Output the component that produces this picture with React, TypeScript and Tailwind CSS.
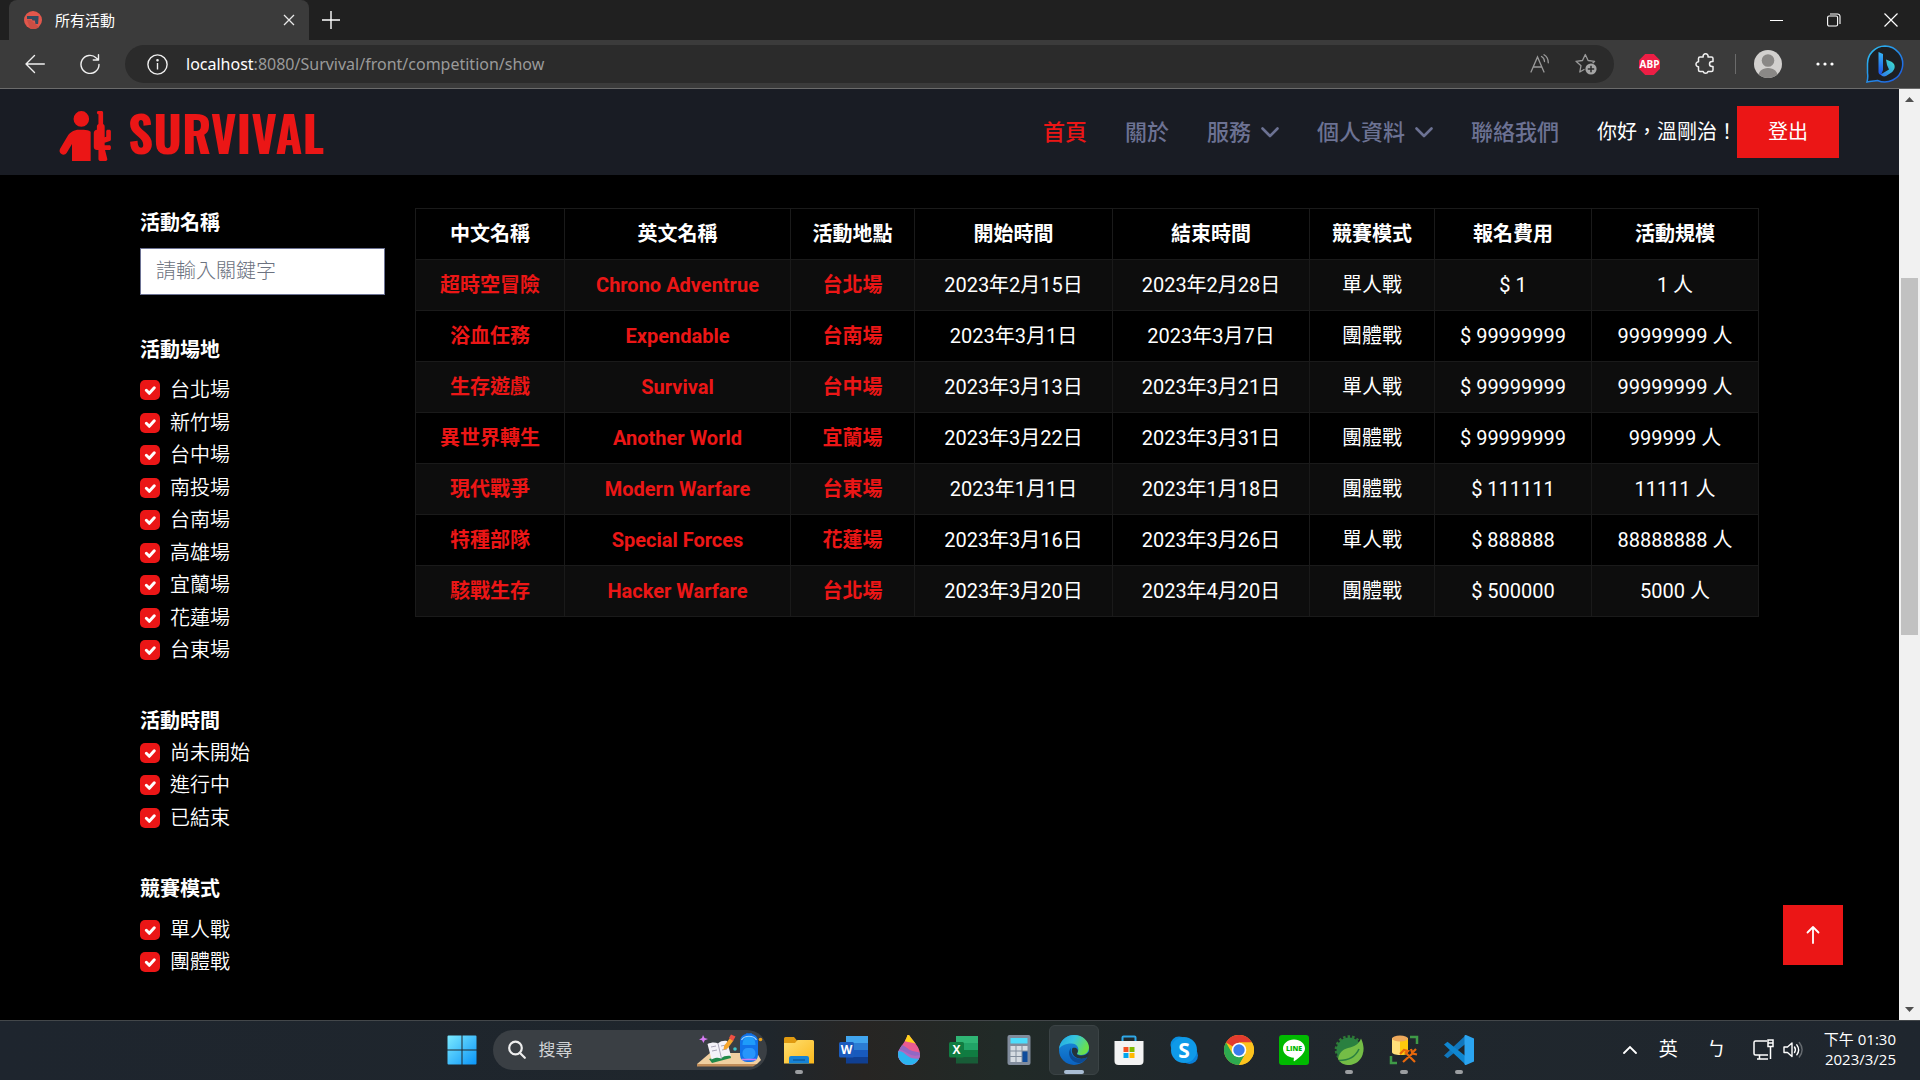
import React from "react";
import { FaPersonRifle } from "react-icons/fa6";

const cjk = "font-['Roboto','Noto_Sans_CJK_TC',sans-serif]";
const shell = "font-['Noto_Sans','Noto_Sans_CJK_TC',sans-serif]";

const venues = ["台北場", "新竹場", "台中場", "南投場", "台南場", "高雄場", "宜蘭場", "花蓮場", "台東場"];
const times = ["尚未開始", "進行中", "已結束"];
const modes = ["單人戰", "團體戰"];

const headers = ["中文名稱", "英文名稱", "活動地點", "開始時間", "結束時間", "競賽模式", "報名費用", "活動規模"];
const rows = [
  ["超時空冒險", "Chrono Adventrue", "台北場", "2023年2月15日", "2023年2月28日", "單人戰", "$ 1", "1 人"],
  ["浴血任務", "Expendable", "台南場", "2023年3月1日", "2023年3月7日", "團體戰", "$ 99999999", "99999999 人"],
  ["生存遊戲", "Survival", "台中場", "2023年3月13日", "2023年3月21日", "單人戰", "$ 99999999", "99999999 人"],
  ["異世界轉生", "Another World", "宜蘭場", "2023年3月22日", "2023年3月31日", "團體戰", "$ 99999999", "999999 人"],
  ["現代戰爭", "Modern Warfare", "台東場", "2023年1月1日", "2023年1月18日", "團體戰", "$ 111111", "11111 人"],
  ["特種部隊", "Special Forces", "花蓮場", "2023年3月16日", "2023年3月26日", "單人戰", "$ 888888", "88888888 人"],
  ["駭戰生存", "Hacker Warfare", "台北場", "2023年3月20日", "2023年4月20日", "團體戰", "$ 500000", "5000 人"],
];

function TitleBar() {
  return (
    <div className="flex h-10 items-stretch bg-[#202020] pl-[9px] pr-px text-white">
      <div className="flex w-[300px] items-center rounded-t-lg bg-[#3b3b3b] pl-[15px] pr-[10px]">
        <svg width="18" height="18" viewBox="0 0 18 18" aria-hidden="true">
          <circle cx="9" cy="9" r="9" fill="#e2574c" />
          <path d="M7 9l8 7.200a9 9 0 0 1-9 1.300L3 9z" fill="#cb4e44" />
          <path d="M3 5h11.500v2l-.4 6h-2.600l-.7-3.500H8.500L7.800 8H3z" fill="#324a5e" />
        </svg>
        <span className="ml-[13px] flex-1 text-[15px]">所有活動</span>
        <button aria-label="關閉分頁" className="grid size-5 place-items-center">
          <svg width="12" height="12" viewBox="0 0 12 12" stroke="#e8e8e8" strokeWidth="1.3"><path d="M1 1l10 10M11 1L1 11" /></svg>
        </button>
      </div>
      <button aria-label="新分頁" className="ml-3 grid w-5 place-items-center">
        <svg width="18" height="18" viewBox="0 0 18 18" stroke="#fff" strokeWidth="1.4"><path d="M9 0v18M0 9h18" /></svg>
      </button>
      <div className="ml-auto flex">
        <button aria-label="最小化" className="grid w-[57px] place-items-center">
          <svg width="14" height="14" viewBox="0 0 14 14" stroke="#fff"><path d="M0 7.500h13" /></svg>
        </button>
        <button aria-label="還原" className="grid w-[57px] place-items-center">
          <svg width="14" height="14" viewBox="0 0 14 14" fill="none" stroke="#fff" strokeWidth="1.1"><rect x=".6" y="3" width="10" height="10" rx="1.500" /><path d="M3 1h7.500a2.500 2.500 0 0 1 2.500 2.500V11" /></svg>
        </button>
        <button aria-label="關閉" className="grid w-[57px] place-items-center">
          <svg width="14" height="14" viewBox="0 0 14 14" stroke="#fff" strokeWidth="1.2"><path d="M.5.5l13 13M13.500.5l-13 13" /></svg>
        </button>
      </div>
    </div>
  );
}

function Toolbar() {
  return (
    <div className="flex h-[49px] items-center border-b border-[#6b6b6b] bg-[#3b3b3b] pl-[25px] pr-4 text-white">
      <button aria-label="上一頁">
        <svg width="20" height="20" viewBox="0 0 20 20" fill="none" stroke="#f0f0f0" strokeWidth="1.4" strokeLinecap="round" strokeLinejoin="round"><path d="M19.300 10H1M9.500 1.500L1 10l8.500 8.500" /></svg>
      </button>
      <button aria-label="重新整理" className="ml-[35px]">
        <svg width="20" height="20" viewBox="0 0 20 20" fill="none" stroke="#f0f0f0" strokeWidth="1.4" strokeLinecap="round" strokeLinejoin="round"><path d="M19 10.500A9 9 0 1 1 16.300 4l2.200 2M18.500.8V6h-5.200" /></svg>
      </button>
      <div className="ml-[25px] flex h-[38px] flex-1 items-center rounded-full bg-[#2b2b2b] pl-[22px] pr-[17px]">
        <svg width="21" height="21" viewBox="0 0 21 21" fill="none" stroke="#f0f0f0" strokeWidth="1.4"><circle cx="10.500" cy="10.500" r="9.600" /><path d="M10.500 9v6.500" /><circle cx="10.500" cy="6.200" r=".6" fill="#fff" /></svg>
        <span className="ml-[18px] flex-1 text-base text-[#9a9a9a]"><span className="text-white">localhost</span>:8080/Survival/front/competition/show</span>
        <button aria-label="朗讀">
          <svg width="21" height="20" viewBox="0 0 21 20" fill="none" stroke="#9a9a9a" strokeWidth="1.3" strokeLinecap="round"><path d="M1 18L7.500 3 14 18M3.200 13h8.600M11.500 2.500c1.800 1 2.900 2.700 3 5M14 .8c2.800 1.700 4.300 4.500 4.300 8M17 .5" /></svg>
        </button>
        <button aria-label="加到我的最愛" className="ml-6">
          <svg width="22" height="22" viewBox="0 0 22 22" fill="none" stroke="#9a9a9a" strokeWidth="1.3" strokeLinejoin="round"><path d="M9.500 16.200L4.800 19l1.200-6.300L1 8.300l6.500-.8L10.300 1.500l2.800 6 6.500.8-2 2" /><circle cx="16" cy="16" r="5.600" fill="#a5a5a5" stroke="none" /><path d="M16 12.800v6.400M12.800 16h6.400" stroke="#2b2b2b" strokeWidth="1.500" /></svg>
        </button>
      </div>
      <button aria-label="Adblock Plus" className="ml-[25px]">
        <svg width="21" height="21" viewBox="0 0 21 21"><path d="M6.200 0h8.600L21 6.200v8.600L14.800 21H6.200L0 14.800V6.200z" fill="#ed1e45" /><text x="10.500" y="14.300" fontSize="10" fontWeight="700" textAnchor="middle" fill="#fff" fontFamily="Open Sans">ABP</text></svg>
      </button>
      <button aria-label="擴充功能" className="ml-[35px]">
        <svg width="20" height="22" viewBox="0 0 20 22" fill="none" stroke="#f0f0f0" strokeWidth="1.500" strokeLinejoin="round"><path d="M5 4h3.200a2.500 2.500 0 1 1 4.800 0h3.500a1.500 1.500 0 0 1 1.500 1.500V8.500h-1a2.500 2.500 0 0 0 0 5h1V17a1.500 1.500 0 0 1-1.500 1.500H13a2.500 2.500 0 0 1-4.800 0H5A1.500 1.500 0 0 1 3.500 17v-3.200a2.500 2.500 0 1 1 0-5V5.500A1.500 1.500 0 0 1 5 4z" /></svg>
      </button>
      <div className="ml-5 h-5 w-px bg-[#6b6b6b]" />
      <button aria-label="設定檔" className="ml-[18px]">
        <svg width="28" height="28" viewBox="0 0 28 28"><defs><clipPath id="avatar"><circle cx="14" cy="14" r="14" /></clipPath></defs><g clipPath="url(#avatar)"><rect width="28" height="28" fill="#d2d0ce" /><circle cx="14" cy="10.500" r="6.300" fill="#8a8886" /><path d="M4 28c0-6.500 4-10 10-10s10 3.500 10 10z" fill="#8a8886" /></g></svg>
      </button>
      <button aria-label="更多" className="ml-[34px]">
        <svg width="18" height="4" viewBox="0 0 18 4" fill="#fff"><circle cx="2" cy="2" r="1.600" /><circle cx="9" cy="2" r="1.600" /><circle cx="16" cy="2" r="1.600" /></svg>
      </button>
      <button aria-label="Bing" className="ml-8">
        <svg width="38" height="38" viewBox="0 0 38 38">
          <defs>
            <linearGradient id="ring" x1="0" y1="0" x2="1" y2="1"><stop offset="0" stopColor="#2fc3f0" /><stop offset="1" stopColor="#1a54e0" /></linearGradient>
            <linearGradient id="bstem" x1="0" y1="0" x2="0" y2="1"><stop offset="0" stopColor="#35b6f5" /><stop offset="1" stopColor="#1b50e8" /></linearGradient>
            <linearGradient id="bbowl" x1="0" y1="1" x2="1" y2="0"><stop offset="0" stopColor="#2a72f0" /><stop offset="1" stopColor="#3fe5c8" /></linearGradient>
          </defs>
          <path d="M19 1a18 18 0 1 1-7.500 34.500C8 36 4 36.500 1 37c.8-3 1-6 .5-9V19A17.700 17.700 0 0 1 19 1z" fill="#1d1f22" stroke="url(#ring)" strokeWidth="1.500" />
          <path d="M12.500 7l4.500 2v16l-2 5c-1.500-.5-2.500-1.500-2.500-3z" fill="url(#bstem)" />
          <path d="M20 14.500l5.500 2.300c5 2.700 3.500 8.200 0 10.700l-5.500 3.500c-2 1-4 .5-5.500-1.500l8.500-5-2-4.500z" fill="url(#bbowl)" />
        </svg>
      </button>
    </div>
  );
}

function Chevron() {
  return (
    <svg width="18" height="11" viewBox="0 0 18 11" fill="none" stroke="currentColor" strokeWidth="2.600" strokeLinecap="round" strokeLinejoin="round" aria-hidden="true"><path d="M1.500 1.500L9 9l7.500-7.500" /></svg>
  );
}

function NavBar() {
  return (
    <nav className="flex h-[86px] items-center bg-[#191c24] px-[60px] font-medium text-[#6c7293]">
      <a href="#home" className="-ml-0.5 flex items-center gap-[14px] text-[#eb1616]">
        <FaPersonRifle className="mt-2 h-[50px] w-14" />
        <span className="font-['Oswald','Roboto_Condensed','Liberation_Sans_Narrow',sans-serif] text-[49px] leading-none font-bold">SURVIVAL</span>
      </a>
      <div className="ml-auto flex items-center gap-[38px] text-[22px]">
        <a href="#home" className="text-[#eb1616]">首頁</a>
        <a href="#about">關於</a>
        <a href="#service" className="flex items-center gap-[10px]">服務<Chevron /></a>
        <a href="#profile" className="flex items-center gap-[10px]">個人資料<Chevron /></a>
        <a href="#contact">聯絡我們</a>
        <div className="flex items-center text-xl font-normal text-white">
          <span>你好，溫剛治！</span>
          <button className="h-[52px] bg-[#eb1616] px-[31px]">登出</button>
        </div>
      </div>
    </nav>
  );
}

function CheckList({ items }: { items: string[] }) {
  return (
    <div>
      {items.map((t) => (
        <label key={t} className="flex items-center gap-[10px] text-xl leading-relaxed font-[350]">
          <span className="grid place-items-center">
            <input type="checkbox" defaultChecked className="col-start-1 row-start-1 size-5 appearance-none rounded-[5px] bg-[#eb1616]" />
            <svg className="pointer-events-none col-start-1 row-start-1" width="20" height="20" viewBox="0 0 20 20" fill="none" stroke="#fff" strokeWidth="3" strokeLinecap="round" strokeLinejoin="round"><path d="M6.300 10.300l3 3 5-5.500" /></svg>
          </span>
          {t}
        </label>
      ))}
    </div>
  );
}

function Filters() {
  return (
    <aside className="flex w-[245px] shrink-0 flex-col gap-[39px] text-xl">
      <div>
        <label htmlFor="keyword" className="block leading-relaxed font-bold">活動名稱</label>
        <input id="keyword" placeholder="請輸入關鍵字" className="mt-2 h-[47px] w-full border border-[#6c7293] bg-white px-[15px] font-light text-black placeholder:text-[#6c7280]" />
      </div>
      <div className="flex flex-col gap-2">
        <h2 className="leading-relaxed font-bold">活動場地</h2>
        <CheckList items={venues} />
      </div>
      <div>
        <h2 className="leading-[31px] font-bold">活動時間</h2>
        <CheckList items={times} />
      </div>
      <div className="flex flex-col gap-2">
        <h2 className="leading-relaxed font-bold">競賽模式</h2>
        <CheckList items={modes} />
      </div>
    </aside>
  );
}

function EventTable() {
  return (
    <table className="w-full table-fixed border-collapse text-center text-xl whitespace-nowrap">
      <colgroup>
        <col className="w-[149px]" />
        <col className="w-[226px]" />
        <col className="w-[124px]" />
        <col className="w-[198px]" />
        <col className="w-[197px]" />
        <col className="w-[125px]" />
        <col className="w-[157px]" />
        <col className="w-[167px]" />
      </colgroup>
      <thead>
        <tr className="h-[51px]">
          {headers.map((h) => <th key={h} className="border border-[#1a1a1a] font-bold">{h}</th>)}
        </tr>
      </thead>
      <tbody>
        {rows.map((r) => (
          <tr key={r[0]} className="h-[51px] odd:bg-[#0d0d0d]">
            {r.map((c, i) => (
              <td key={i} className={i < 3 ? "border border-[#1a1a1a] font-bold text-[#eb1616]" : "border border-[#1a1a1a] font-normal"}>
                {i < 3 ? <a href="#event">{c}</a> : c}
              </td>
            ))}
          </tr>
        ))}
      </tbody>
    </table>
  );
}

function ScrollBar() {
  return (
    <div className="flex w-[21px] shrink-0 flex-col items-center bg-[#f1f1f1] py-2">
      <svg width="9" height="5" viewBox="0 0 9 5" fill="#505050"><path d="M4.500 0L9 5H0z" /></svg>
      <div className="flex w-full flex-1 flex-col items-center py-[7px]">
        <div className="basis-[19%]" />
        <div className="w-[17px] basis-[40%] bg-[#c1c1c1]" />
      </div>
      <svg width="9" height="5" viewBox="0 0 9 5" fill="#505050"><path d="M4.500 5L9 0H0z" /></svg>
    </div>
  );
}

const svg30 = { width: 30, height: 30, viewBox: "0 0 30 30" };

function OfficeIcon({ letter, c }: { letter: string; c: string[] }) {
  return (
    <svg {...svg30}>
      <rect x="7" y="1" width="22" height="7" fill={c[0]} />
      <rect x="7" y="8" width="22" height="7" fill={c[1]} />
      <rect x="7" y="15" width="22" height="7" fill={c[2]} />
      <rect x="7" y="22" width="22" height="6.500" fill={c[3]} />
      <rect x="0" y="7" width="15" height="15.500" rx="1.500" fill={c[4]} />
      <text x="7.500" y="19" fontSize="12" fontWeight="700" textAnchor="middle" fill="#fff" fontFamily="Open Sans">{letter}</text>
    </svg>
  );
}

const apps: { name: string; state?: "open" | "active"; icon: React.ReactNode }[] = [
  {
    name: "檔案總管", state: "open",
    icon: <svg {...svg30}><defs><linearGradient id="fold" x1="0" y1="0" x2="1" y2="1"><stop offset="0" stopColor="#ffdf70" /><stop offset="1" stopColor="#fbb81c" /></linearGradient></defs><path d="M0 3.500A1.500 1.500 0 0 1 1.500 2H10l3 3.500V10H0z" fill="#e09a10" /><path d="M0 8h11l2.500-3h15A1.500 1.500 0 0 1 30 6.500v22H0z" fill="url(#fold)" /><path d="M5 28.500V23a2 2 0 0 1 2-2h16a2 2 0 0 1 2 2v5.500z" fill="#1583d6" /><path d="M9 25h12" stroke="#0b5394" strokeWidth="1.200" /></svg>,
  },
  { name: "Word", icon: <OfficeIcon letter="W" c={["#41a5ee", "#2b7cd3", "#185abd", "#103f91", "#1b5bbd"]} /> },
  {
    name: "小畫家 3D",
    icon: <svg {...svg30}><defs><clipPath id="drop"><path d="M15 0c3.500 5.500 11 12 11 19a11 11 0 0 1-22 0C4 13 11.500 8 13.500 0z" /></clipPath></defs><g clipPath="url(#drop)"><rect width="30" height="30" fill="#ea5b92" /><path d="M10 0h12v9c-3-2-6-1-12-3z" fill="#ffd21a" /><path d="M4 10c6-1 8 3 12 5s8 1 12 4v11H0V12z" fill="#9168c4" /><path d="M2 15c6-1 9 2 13 4s6 2 12 1v10H2z" fill="#b06ac0" /><path d="M2 16.500c6-1 8 1.500 11 4s7 4 14 3V30H2z" fill="#2bb4f0" /></g></svg>,
  },
  { name: "Excel", icon: <OfficeIcon letter="X" c={["#2fb574", "#21a366", "#107c41", "#185c37", "#107c41"]} /> },
  {
    name: "小算盤",
    icon: <svg {...svg30}><rect x="3.500" width="23" height="30" rx="2" fill="#818c9c" /><rect x="6.500" y="3" width="17" height="5.500" fill="#4cdcfb" /><g fill="#d5dbe2"><rect x="6.500" y="11" width="5" height="4.500" /><rect x="12.500" y="11" width="5" height="4.500" /><rect x="18.500" y="11" width="5" height="4.500" /><rect x="6.500" y="16.500" width="5" height="4.500" /><rect x="12.500" y="16.500" width="5" height="4.500" /><rect x="6.500" y="22" width="5" height="5" /><rect x="12.500" y="22" width="5" height="5" /></g><rect x="18.500" y="16.500" width="5" height="10.500" fill="#0f4c9c" /></svg>,
  },
  {
    name: "Edge", state: "active",
    icon: <svg {...svg30}><defs><linearGradient id="eg1" x1="0" y1="0" x2="1" y2=".4"><stop offset="0" stopColor="#1fa5e0" /><stop offset=".5" stopColor="#36c5e0" /><stop offset="1" stopColor="#69e04c" /></linearGradient><linearGradient id="eg2" x1="0" y1="0" x2="0" y2="1"><stop offset="0" stopColor="#1b8fdc" /><stop offset="1" stopColor="#0a62c0" /></linearGradient></defs><circle cx="15" cy="15" r="15" fill="url(#eg2)" /><path d="M0 14C1 5.500 7.500 0 15 0c9 0 15 6.500 15 12.500 0 4.500-3.500 7.500-7.500 7.500-3 0-5-1-4-2.500 2.500-4-.5-9-6-9C6 8.500 1.500 11 0 14z" fill="url(#eg1)" /><path d="M12 13c-4 4-2 13 7 15 4 .5 8-3 9.500-6-4 2.500-9 2.500-12.500.5-3.500-2-5-6-4-9.500z" fill="#0c4a94" /><path d="M13.500 13c4-1.500 6.500 2 5 4.500-1.500 2 0 3 4 3 3 0 5-1 7.500-4 0 3-.5 4.500-1.500 5.500-4 2.500-9 2-12 0-3-2-4.500-6-3-9z" fill="#26323a" /></svg>,
  },
  {
    name: "Microsoft Store",
    icon: <svg {...svg30}><path d="M8.500 8V2.500a1 1 0 0 1 1-1h11a1 1 0 0 1 1 1V8" fill="none" stroke="#2fa8e8" strokeWidth="2" /><path d="M.5 6h29v20a4 4 0 0 1-4 4h-21a4 4 0 0 1-4-4z" fill="#f3f3f3" /><path d="M9.500 12h5v5h-5z" fill="#f25022" /><path d="M15.500 12h5v5h-5z" fill="#7fba00" /><path d="M9.500 18h5v5h-5z" fill="#00a4ef" /><path d="M15.500 18h5v5h-5z" fill="#ffb900" /></svg>,
  },
  {
    name: "Skype",
    icon: <svg {...svg30}><circle cx="10" cy="10" r="8.500" fill="#0a8fe0" /><circle cx="20.500" cy="20.500" r="8.500" fill="#0a7fd8" /><circle cx="15" cy="15" r="13" fill="#0f9ae8" /><text x="15" y="22.500" fontSize="21" fontWeight="700" textAnchor="middle" fill="#fff" fontFamily="Open Sans">S</text></svg>,
  },
  {
    name: "Chrome",
    icon: <svg {...svg30}><circle cx="15" cy="15" r="15" fill="#fbc116" /><path d="M15 15L2 7.500A15 15 0 0 1 28 7.500H15z" fill="#e33b2e" /><path d="M2 7.500A15 15 0 0 0 15 30l6.500-11.200L15 15l-6.500 3.800z" fill="#2da94f" /><path d="M15 7.500h13A15 15 0 0 1 15 30l6.500-11.200z" fill="#fcc31e" /><circle cx="15" cy="15" r="7.300" fill="#fff" /><circle cx="15" cy="15" r="5.700" fill="#3a7cec" /></svg>,
  },
  {
    name: "LINE",
    icon: <svg {...svg30}><rect width="30" height="30" rx="3" fill="#00b900" /><path d="M15 4.500c6.300 0 11 4 11 9 0 4.500-5.500 9-10.500 12.500-.8.500-1-.2-.8-1l.2-2.300C8.500 22.300 4 18.500 4 13.500c0-5 4.700-9 11-9z" fill="#fff" /><text x="15" y="16.300" fontSize="7" fontWeight="800" textAnchor="middle" fill="#00b900" fontFamily="Open Sans">LINE</text></svg>,
  },
  {
    name: "Spring Tool Suite", state: "open",
    icon: <svg {...svg30}><circle cx="15" cy="14.500" r="12.800" fill="none" stroke="#2f7a35" strokeWidth="3" strokeDasharray="2.500 2" /><circle cx="15" cy="15" r="12.500" fill="#2a8040" /><path d="M27 3.500c2.500 5 3.500 11 1.500 16.500-2.500 7-9 10.500-15 10-5-.5-8-3-9.500-6 1-5.500 4-9.500 10-11C20 11.500 25 9.500 27 3.500z" fill="#74bd46" /><path d="M5 25.500c8 0 16-2.500 20-11.500" fill="none" stroke="#2a8040" strokeWidth="1.600" /></svg>,
  },
  {
    name: "資料庫工具", state: "open",
    icon: <svg {...svg30}><path d="M3 3v14c0 1.800 3.500 3 8 3s8-1.200 8-3V3z" fill="#ffe07a" /><path d="M11 3h8v14c0 1.800-3 3-8 3z" fill="#fccb0c" /><ellipse cx="11" cy="3.500" rx="8" ry="3" fill="#eda95c" /><path d="M21 2h7v7M8 28H2v-7" fill="none" stroke="#3f9a47" strokeWidth="2.500" /><path d="M14 27l10-9M16 17l10 10M11 19l4-4 4 1-3 3M22 14l1.500 4.500 4.500 1M27 14l-3 3" fill="none" stroke="#e8680c" strokeWidth="2.200" /></svg>,
  },
  {
    name: "Visual Studio Code", state: "open",
    icon: <svg {...svg30}><path d="M22 0v8.500L3.500 23.200 0 20.500z" fill="#1177bd" /><path d="M22 30v-8.500L3.500 6.800 0 9.500z" fill="#0f86d0" /><path d="M22 0l8 3.500v23L22 30c-1 0-1.500-.5-1.500-1V1c0-.6.500-1 1.500-1z" fill="#2ba4f0" /></svg>,
  },
];

function SearchArt() {
  return (
    <svg width="66" height="34" viewBox="0 0 66 34" aria-hidden="true">
      <path d="M0 31L13 20h47l4 7-4 4z" fill="#f0cfa0" /><path d="M0 31h60l-4 2.500H0z" fill="#c08c58" />
      <path d="M12 26l3 4 19-5-1-4z" fill="#1f8a4a" />
      <path d="M10.500 11c4-2 8-2 10.500-.5 2.500-2.500 6-3 9-2.500l4 15c-4-.5-7.500 0-10 2.500-3-1.500-6-1-9.500 1z" fill="#f4f2f8" /><path d="M21 10.500l3.500 15M14 14l5-1M15 18l5-1M24 13l5-1M25 17l5-1" stroke="#a9a5b8" fill="none" />
      <path d="M27 13l6-8 3.500 2.500-6 8-4 1.500z" fill="#f6a52c" /><path d="M32 5l2-3.500 4.500 2L36 8z" fill="#ee5044" />
      <path d="M49 3c0-4 6-4 6 0" fill="none" stroke="#1265c8" strokeWidth="1.500" />
      <rect x="43" y="1" width="18" height="28" rx="7" fill="#1273ea" /><path d="M45.500 12c0-12 13-12 13 0z" fill="#1e9cfa" /><path d="M44.500 7c3-5 12-5 15 0" fill="none" stroke="#9bd4fb" strokeWidth="1.200" /><rect x="45.500" y="15" width="13" height="11" rx="5" fill="#2896fb" /><path d="M45 26.500h14" stroke="#c67cf5" strokeWidth="1.600" />
      <path d="M6 2l1.500 3L11 6 7.700 7.300 6.500 10 5 7.300 2 6.500 5 5z" fill="#d77cf5" /><circle cx="63.500" cy="6.500" r="1.800" fill="#eaa21b" /><circle cx="38" cy="16" r="1.800" fill="#3fc3cc" />
    </svg>
  );
}

function Taskbar() {
  return (
    <footer className="grid h-[60px] grid-cols-[1fr_auto_1fr] items-center border-t border-[#43474a] bg-[linear-gradient(90deg,#1e252e_0%,#1f262c_40%,#272523_45%,#212a27_52%,#20272c_62%,#1f262e_100%)] pb-[2px] text-white">
      <div />
      <div className="flex items-center">
        <button aria-label="開始" className="grid w-[50px] place-items-center">
          <svg width="30" height="30" viewBox="0 0 30 30"><defs><linearGradient id="win" x1="0" y1="0" x2="1" y2="1"><stop offset="0" stopColor="#7ceaff" /><stop offset="1" stopColor="#0a94f8" /></linearGradient></defs><path d="M.5 1.500a1 1 0 0 1 1-1h13v14H.5zM15.500.5h13a1 1 0 0 1 1 1v13h-14zM.5 15.500h14v14h-13a1 1 0 0 1-1-1zM15.500 15.500h14v13a1 1 0 0 1-1 1h-13z" fill="url(#win)" /></svg>
        </button>
        <button className="ml-[6px] flex h-10 w-[274px] items-center rounded-full bg-[#3a3f44] pl-[15px] pr-[4px] text-[17px] text-[#d0d2d4]">
          <svg width="18" height="19" viewBox="0 0 18 19" fill="none" stroke="#eee" strokeWidth="2.200" strokeLinecap="round"><circle cx="7.500" cy="8" r="6.300" /><path d="M12 13l4.800 4.800" /></svg>
          <span className="ml-[13px]">搜尋</span>
          <span className="ml-auto"><SearchArt /></span>
        </button>
        <div className="ml-[7px] flex gap-[5px]">
          {apps.map((a) => (
            <button key={a.name} aria-label={a.name} className={a.state === "active" ? "flex h-[50px] w-[50px] flex-col items-center rounded-md border border-[#3b4345] bg-[#30383a] pt-[9px]" : "flex h-[50px] w-[50px] flex-col items-center pt-[10px]"}>
              {a.icon}
              {a.state === "active" && <span className="mt-[5px] h-1 w-5 rounded-full bg-[#a9bdd4]" />}
              {a.state === "open" && <span className="mt-[5px] h-1 w-2 rounded-full bg-[#9b9ea1]" />}
            </button>
          ))}
        </div>
      </div>
      <div className="flex items-center justify-end pr-6">
        <button aria-label="顯示隱藏的圖示">
          <svg width="14" height="9" viewBox="0 0 14 9" fill="none" stroke="#fff" strokeWidth="1.800" strokeLinecap="round"><path d="M1 8l6-6 6 6" /></svg>
        </button>
        <span className="ml-[22px] text-[19px]">英</span>
        <span className="ml-[29px] text-[19px]">ㄅ</span>
        <svg className="ml-[27px]" width="21" height="21" viewBox="0 0 21 21" fill="none" stroke="#fff" strokeWidth="1.500"><path d="M14 2H2.500A1.500 1.500 0 0 0 1 3.500v11A1.500 1.500 0 0 0 2.500 16H15M6.500 16v3.500M4 20h11" /><path d="M15 1h5v6.500h-5zM15 4h5M17.500 7.500V20" /></svg>
        <svg className="ml-[9px]" width="21" height="19" viewBox="0 0 21 19" fill="none" stroke="#fff" strokeWidth="1.400" strokeLinecap="round" strokeLinejoin="round"><path d="M1 7h3.500L9 3v13.500L4.500 12.500H1zM11.500 7c1 1.500 1 4 0 5.500M13.800 4.800c2.200 3 2.200 7 0 10" /><path d="M16.300 2.500c3.500 4.500 3.500 10 0 14.500" stroke="#666b70" /></svg>
        <div className="ml-5 pb-0.5 text-right font-['Open_Sans','Noto_Sans_CJK_TC',sans-serif] text-[15px] leading-5">
          <div>下午 01:30</div>
          <div>2023/3/25</div>
        </div>
      </div>
    </footer>
  );
}

export default function App() {
  return (
    <div lang="zh-Hant" className={`flex min-h-screen flex-col bg-black ${shell}`}>
      <TitleBar />
      <Toolbar />
      <div className="flex flex-1">
        <div className={`relative flex-1 bg-black text-white ${cjk}`}>
          <NavBar />
          <main className="flex gap-[30px] px-[140px] pt-8">
            <Filters />
            <div className="flex-1 pt-px"><EventTable /></div>
          </main>
          <a href="#top" aria-label="回到頂端" className="absolute right-14 bottom-[55px] grid size-[60px] place-items-center bg-[#eb1616]">
            <svg width="14" height="20" viewBox="0 0 14 20" fill="none" stroke="#fff" strokeWidth="1.800" strokeLinecap="round" strokeLinejoin="round"><path d="M7 18V2M1.500 7.500L7 2l5.500 5.500" /></svg>
          </a>
        </div>
        <ScrollBar />
      </div>
      <Taskbar />
    </div>
  );
}
